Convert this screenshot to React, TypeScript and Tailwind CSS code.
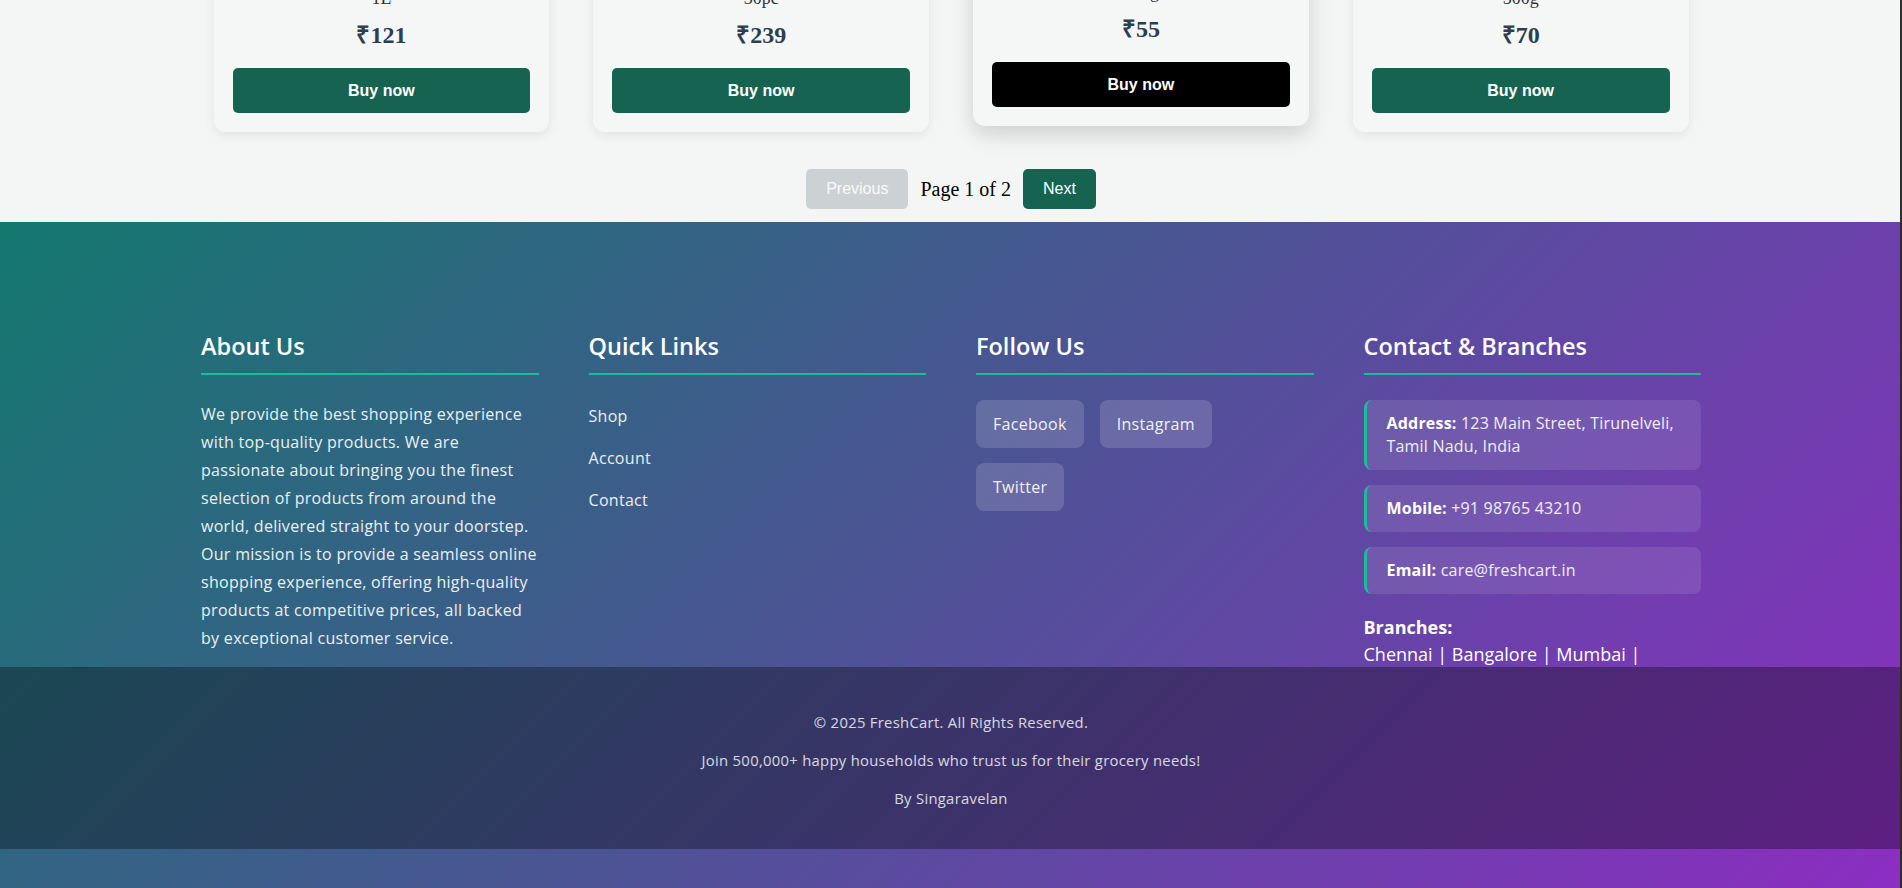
import React from 'react';

interface Product {
  id: number;
  name: string;
  unit: string;
  price: number;
}

const products: Product[] = [
  { id: 1, name: 'Fresh Milk', unit: '1L', price: 121 },
  { id: 2, name: 'Farm Eggs', unit: '30pc', price: 239 },
  { id: 3, name: 'Green Peas', unit: '250g', price: 55 },
  { id: 4, name: 'Basmati Rice', unit: '500g', price: 70 },
];

const serif = "font-['Liberation_Serif','Times_New_Roman',serif]";
const arial = "font-['Liberation_Sans',Arial,sans-serif]";

const ProductCard: React.FC<{ product: Product; hovered?: boolean }> = ({ product, hovered }) => (
  <div
    className={`flex flex-col items-center rounded-[12px] bg-[#f5f7f6] px-[19px] pt-[19px] pb-[19px] text-center ${
      hovered
        ? '-translate-y-[6px] shadow-[0_8px_22px_rgba(0,0,0,0.16)]'
        : 'shadow-[0_3px_12px_rgba(0,0,0,0.08)]'
    }`}
  >
    <h3 className={`${serif} text-[20px] leading-[26px] font-bold text-[#2c3e50]`}>{product.name}</h3>
    <p className={`${serif} mt-[6px] text-[18px] leading-[22px] text-[#333]`}>{product.unit}</p>
    <p className={`${serif} mt-[12px] text-[24px] leading-[28px] font-bold text-[#2c3e50]`}>₹{product.price}</p>
    <button
      className={`${arial} mt-[19px] h-[45px] w-full rounded-[5px] text-[16px] font-bold text-white ${
        hovered ? 'bg-black' : 'bg-[#166352]'
      }`}
    >
      Buy now
    </button>
  </div>
);

const FooterHeading: React.FC<{ children: React.ReactNode }> = ({ children }) => (
  <h3 className="mb-[25px] border-b-2 border-[#1abc9c] pb-3 text-[23.5px] leading-[28.8px] font-semibold tracking-normal text-white">
    {children}
  </h3>
);

const contacts = [
  { label: 'Address:', value: '123 Main Street, Tirunelveli, Tamil Nadu, India' },
  { label: 'Mobile:', value: '+91 98765 43210' },
  { label: 'Email:', value: 'care@freshcart.in' },
];

export default function App() {
  return (
    <div className="min-h-screen w-full">
      <div className="fixed top-0 right-0 z-10 h-full w-[2px] bg-[#2e2e2e]" />
      <section className="bg-[#f4f6f5] pb-[13px]">
        <div className="mx-auto -mt-[64px] grid w-[1475px] grid-cols-4 items-start gap-[44px]">
          {products.map((p) => (
            <ProductCard key={p.id} product={p} hovered={p.id === 3} />
          ))}
        </div>
        <div className="mt-[37px] flex items-center justify-center">
          <button className={`${arial} h-10 rounded-[5px] bg-[#ccd1d3] px-5 text-[16px] text-white/90`}>
            Previous
          </button>
          <span className={`${serif} mx-3 text-[20px] text-black`}>Page 1 of 2</span>
          <button className={`${arial} h-10 rounded-[5px] bg-[#166352] px-5 text-[16px] text-white`}>
            Next
          </button>
        </div>
      </section>

      <footer className="bg-[linear-gradient(135deg,#13786e_0%,#4e5296_50%,#8c2ec2_100%)] pb-[39px] font-['Open_Sans',Lato,sans-serif] tracking-[0.3px] text-white">
        <div className="h-[445px] overflow-hidden pt-[110px]">
          <div className="mx-auto grid w-[1500px] grid-cols-4 gap-[50px]">
            <div>
              <FooterHeading>About Us</FooterHeading>
              <p className="text-[16px] leading-[28px] text-white/90">
                We provide the best shopping experience with top-quality products. We are passionate about bringing
                you the finest selection of products from around the world, delivered straight to your doorstep. Our
                mission is to provide a seamless online shopping experience, offering high-quality products at
                competitive prices, all backed by exceptional customer service.
              </p>
            </div>
            <div>
              <FooterHeading>Quick Links</FooterHeading>
              <ul className="pt-[4px] text-[16px] leading-6 text-white/90">
                <li className="mb-[18px]">Shop</li>
                <li className="mb-[18px]">Account</li>
                <li className="mb-[18px]">Contact</li>
              </ul>
            </div>
            <div>
              <FooterHeading>Follow Us</FooterHeading>
              <div className="flex max-w-[260px] flex-wrap gap-x-4 gap-y-[15px]">
                {['Facebook', 'Instagram', 'Twitter'].map((s) => (
                  <span
                    key={s}
                    className="flex h-12 items-center rounded-lg bg-white/15 px-[17px] text-[16px] text-white/90"
                  >
                    {s}
                  </span>
                ))}
              </div>
            </div>
            <div>
              <FooterHeading>Contact &amp; Branches</FooterHeading>
              <div className="flex flex-col gap-[15px]">
                {contacts.map((c) => (
                  <div
                    key={c.label}
                    className="rounded-lg border-l-[3px] border-[#1abc9c] bg-white/10 px-5 py-3 text-[16px] leading-[23px] tracking-[0.2px] text-white/90"
                  >
                    <strong className="font-bold text-white">{c.label}</strong> {c.value}
                  </div>
                ))}
              </div>
              <p className="mt-[20px] text-[18px] leading-[27px] tracking-normal text-white">
                <strong className="font-bold">Branches:</strong>
                <br />
                Chennai | Bangalore | Mumbai | Hyderabad | Coimbatore
              </p>
            </div>
          </div>
        </div>
        <div className="flex flex-col items-center gap-[18px] bg-black/[0.33] pt-[45px] pb-[41px] text-[14.8px] leading-[20px] text-white/80">
          <p>© 2025 FreshCart. All Rights Reserved.</p>
          <p>Join 500,000+ happy households who trust us for their grocery needs!</p>
          <p>By Singaravelan</p>
        </div>
      </footer>
    </div>
  );
}
